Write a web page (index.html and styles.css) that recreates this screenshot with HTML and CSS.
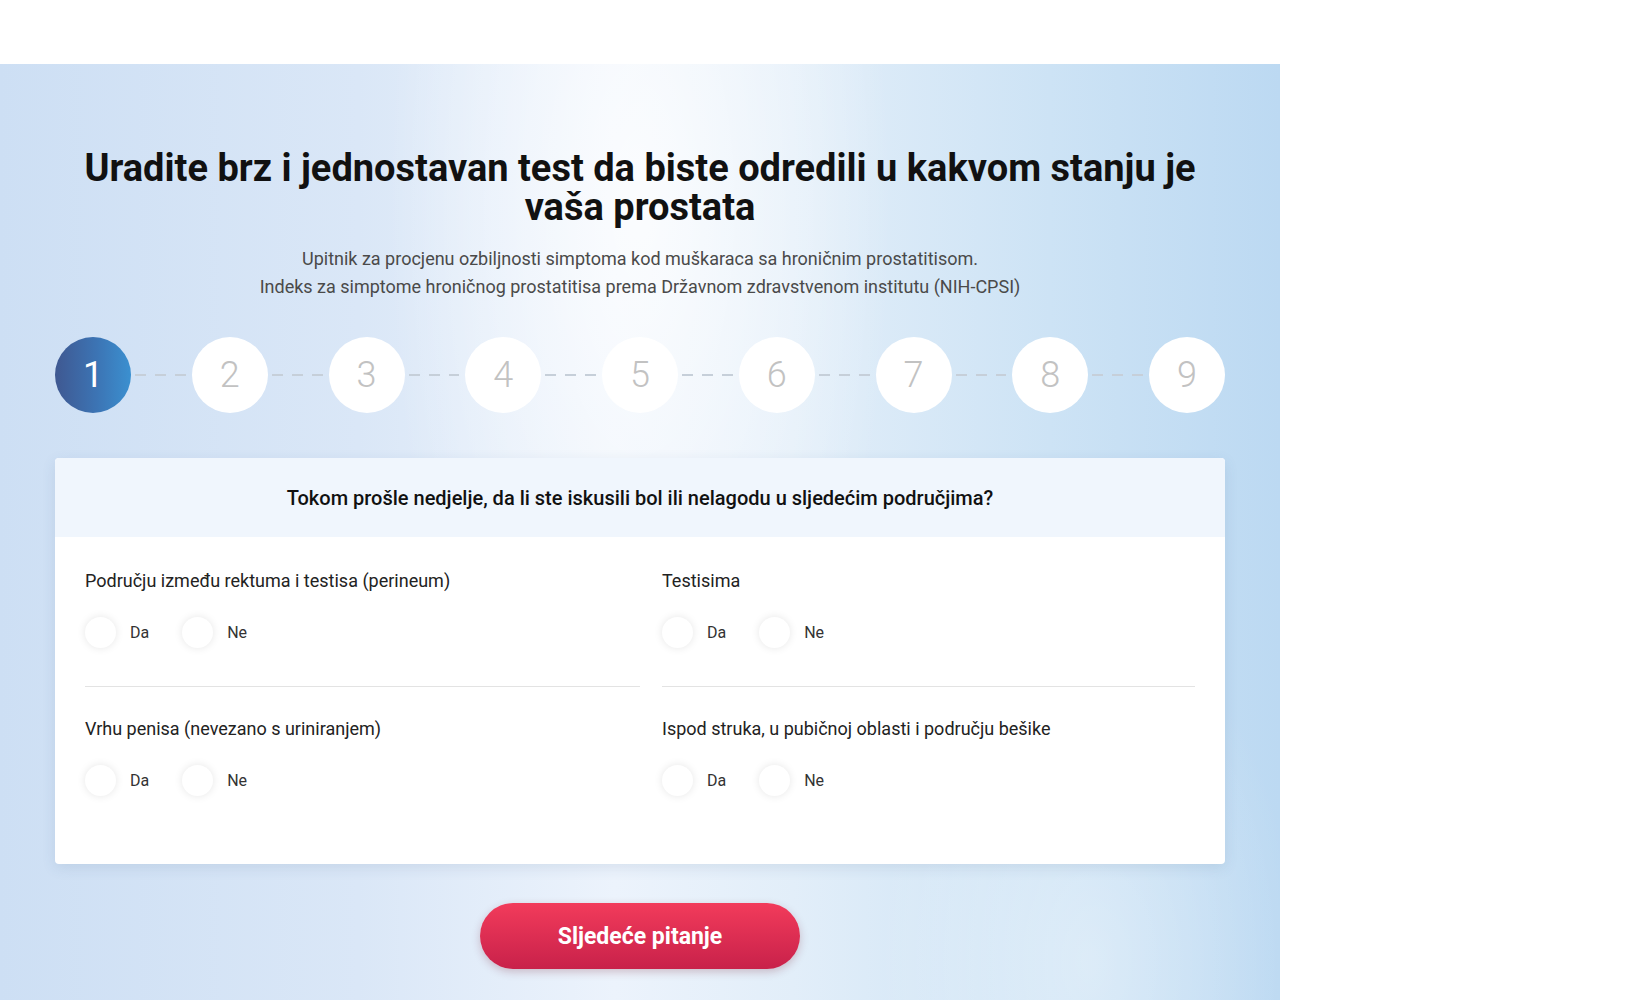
FILE: index.html
```html
<!DOCTYPE html>
<html lang="bs">
<head>
<meta charset="UTF-8">
<title>Test prostate</title>
<link rel="stylesheet" href="styles.css">
</head>
<body>
    <div class="top-bar"></div>

    <section class="test-section">
        <div class="container">
            <h1 class="title">Uradite brz i jednostavan test da biste odredili u kakvom stanju je vaša prostata</h1>
            <p class="subtitle">
                Upitnik za procjenu ozbiljnosti simptoma kod muškaraca sa hroničnim prostatitisom.<br>
                Indeks za simptome hroničnog prostatitisa prema Državnom zdravstvenom institutu (NIH-CPSI)
            </p>

            <div class="steps">
                <div class="step active">1</div>
                <div class="dash"></div>
                <div class="step">2</div>
                <div class="dash"></div>
                <div class="step">3</div>
                <div class="dash"></div>
                <div class="step">4</div>
                <div class="dash"></div>
                <div class="step">5</div>
                <div class="dash"></div>
                <div class="step">6</div>
                <div class="dash"></div>
                <div class="step">7</div>
                <div class="dash"></div>
                <div class="step">8</div>
                <div class="dash"></div>
                <div class="step">9</div>
            </div>

            <form class="card">
                <div class="card-head">Tokom prošle nedjelje, da li ste iskusili bol ili nelagodu u sljedećim područjima?</div>
                <div class="questions">
                    <div class="q-item first-row">
                        <div class="q-label">Području između rektuma i testisa (perineum)</div>
                        <div class="q-options">
                            <label class="opt"><input type="radio" name="q1"><span class="dot"></span>Da</label>
                            <label class="opt"><input type="radio" name="q1"><span class="dot"></span>Ne</label>
                        </div>
                    </div>
                    <div class="q-item first-row">
                        <div class="q-label">Testisima</div>
                        <div class="q-options">
                            <label class="opt"><input type="radio" name="q2"><span class="dot"></span>Da</label>
                            <label class="opt"><input type="radio" name="q2"><span class="dot"></span>Ne</label>
                        </div>
                    </div>
                    <div class="q-item">
                        <div class="q-label">Vrhu penisa (nevezano s uriniranjem)</div>
                        <div class="q-options">
                            <label class="opt"><input type="radio" name="q3"><span class="dot"></span>Da</label>
                            <label class="opt"><input type="radio" name="q3"><span class="dot"></span>Ne</label>
                        </div>
                    </div>
                    <div class="q-item">
                        <div class="q-label">Ispod struka, u pubičnoj oblasti i području bešike</div>
                        <div class="q-options">
                            <label class="opt"><input type="radio" name="q4"><span class="dot"></span>Da</label>
                            <label class="opt"><input type="radio" name="q4"><span class="dot"></span>Ne</label>
                        </div>
                    </div>
                </div>
            </form>

            <div class="actions">
                <button type="button" class="next-btn">Sljedeće pitanje</button>
            </div>
        </div>
    </section>
</body>
</html>
```

FILE: styles.css
```css
body {
margin: 0;
font-family: Roboto, "Liberation Sans", sans-serif;
background: #fff;
color: #222;
}

.top-bar {
height: 64px;
background: #fff;
}

.test-section {
width: 1280px;
min-height: 936px;
padding: 85px 55px 40px;
box-sizing: border-box;
background:
    radial-gradient(ellipse 360px 950px at 50% 15%, rgba(255,255,255,0.8), rgba(255,255,255,0) 70%),
    radial-gradient(ellipse 300px 500px at 85% 95%, rgba(255,255,255,0.35), rgba(255,255,255,0) 70%),
    linear-gradient(90deg, #cddff4 0%, #dae7f7 28%, #ecf3fc 48%, #e2eef9 62%, #cde3f5 82%, #bcd9f2 100%);
}

.container {
width: 1170px;
}

.title {
margin: 0;
font-size: 38px;
line-height: 39px;
font-weight: 700;
color: #111;
text-align: center;
}

.subtitle {
margin: 18px 0 0;
font-size: 18px;
line-height: 28px;
color: #4a4a4a;
text-align: center;
}

.steps {
margin-top: 36px;
display: flex;
align-items: center;
}

.step {
width: 76px;
height: 76px;
flex: none;
border-radius: 50%;
background: #fff;
color: #c2c2c2;
font-size: 36px;
font-weight: 300;
display: flex;
align-items: center;
justify-content: center;
}

.step.active {
background: linear-gradient(90deg, #3f5891 0%, #3c74b4 55%, #3b90d0 100%);
color: #fff;
font-weight: 400;
}

.dash {
flex: 1;
height: 2px;
margin: 0 6px 0 4px;
background: repeating-linear-gradient(90deg, #c6cfd9 0 11px, transparent 11px 20px);
}

.card {
margin-top: 45px;
background: #fff;
border-radius: 4px;
box-shadow: 0 4px 14px rgba(60, 90, 130, 0.12);
overflow: hidden;
}

.card-head {
height: 79px;
display: flex;
align-items: center;
justify-content: center;
background: #f0f6fd;
font-size: 20px;
font-weight: 500;
color: #111;
}

.questions {
display: grid;
grid-template-columns: 555px 1fr;
column-gap: 22px;
padding: 32px 30px 30px;
}

.q-item {
padding-bottom: 38px;
}

.q-item.first-row {
border-bottom: 1px solid #e3e3e3;
margin-bottom: 30px;
}

.q-label {
font-size: 18px;
line-height: 24px;
color: #222;
}

.q-options {
margin-top: 24px;
display: flex;
gap: 33px;
}

.opt {
display: flex;
align-items: center;
gap: 14px;
font-size: 16px;
color: #333;
cursor: pointer;
}

.opt input {
display: none;
}

.opt .dot {
width: 31px;
height: 31px;
border-radius: 50%;
background: #fff;
box-shadow: 0 0 8px rgba(0, 0, 0, 0.1);
}

.actions {
margin-top: 39px;
display: flex;
justify-content: center;
}

.next-btn {
width: 320px;
height: 66px;
border: none;
border-radius: 33px;
background: linear-gradient(180deg, #f23b5b 0%, #c8214a 100%);
color: #fff;
font-family: Roboto, "Liberation Sans", sans-serif;
font-size: 23px;
font-weight: 700;
cursor: pointer;
box-shadow: 0 3px 8px rgba(120, 30, 50, 0.25);
}
```
